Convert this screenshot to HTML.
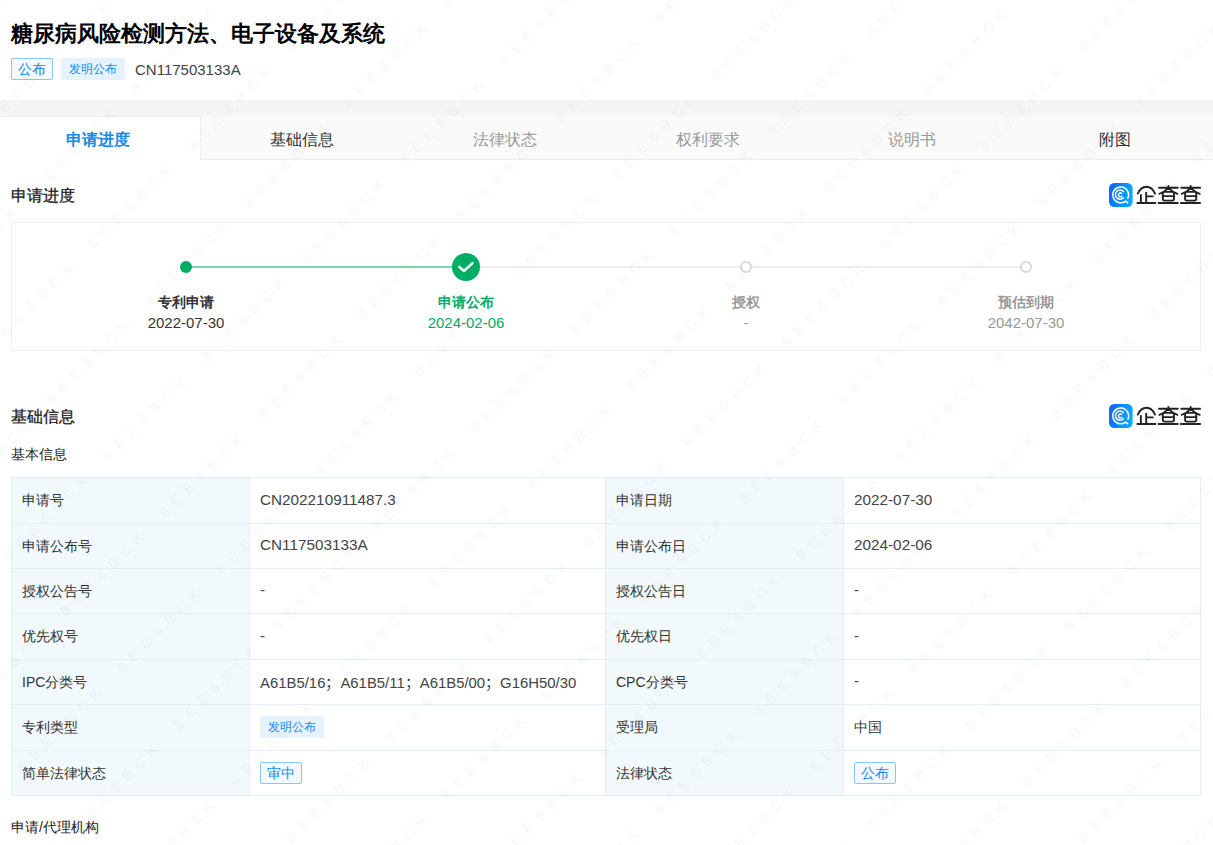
<!DOCTYPE html>
<html><head><meta charset="utf-8">
<style>
*{margin:0;padding:0;box-sizing:border-box}
html,body{width:1213px;height:845px;overflow:hidden;background:#fff}
body{font-family:"Liberation Sans",sans-serif;color:#333;position:relative}
.abs{position:absolute;white-space:nowrap}
.wm{position:absolute;left:0;top:0;pointer-events:none}
.title{left:11px;top:20px;font-size:22px;line-height:28px;font-weight:bold;color:#000}
.tag{position:absolute;top:58px;height:22px;line-height:20px;font-size:12px;color:#128bed;border-radius:2px;text-align:center}
.tag1{left:11px;width:42px;border:1px solid #88c5f6;background:#f3f9fe;font-size:14px}
.tag2{left:61px;width:64px;background:#e6f3fe;border:1px solid #e6f3fe;line-height:21px}
.pno{left:135px;top:60px;font-size:15px;line-height:20px;color:#444}
.band{left:0;top:100px;width:1213px;height:16px;background:#f5f5f5}
.tabs{position:absolute;left:-3.4px;top:116px;width:1219.7px;height:44px;display:flex;background:#fafafa;border-bottom:1px solid #eee}
.tab{flex:1;text-align:center;font-size:16px;line-height:43px;padding-top:2px;color:#333}
.tab.act{background:#fff;color:#128bed;border-right:1px solid #eee;border-top:1px solid #eee;line-height:42px;margin-bottom:-1px;font-weight:bold}
.tab.dis{color:#999}
.h2{left:11px;font-size:16px;line-height:22px;font-weight:500;color:#222;-webkit-text-stroke:0.3px #222}
.logo{position:absolute;left:1109px;width:94px;height:25px}
.box{position:absolute;left:11px;top:222px;width:1190px;height:129px;border:1px solid #eee}
.line{position:absolute;height:2px;top:266px}
.dot{position:absolute;border-radius:50%}
.slab{position:absolute;width:200px;text-align:center;font-size:14px;line-height:20px;font-weight:bold;top:292px}
.sdate{position:absolute;width:200px;text-align:center;font-size:15px;line-height:20px;top:313px}
.h3{left:11px;font-size:14px;line-height:20px;color:#222}
table{position:absolute;left:11px;top:477px;width:1189px;border-collapse:collapse;table-layout:fixed}
td{border:1px solid #e4eef6;font-size:14px;padding:1px 10px 0;color:#333;white-space:nowrap}
td.l{background:#f2f9fc}
.vt{font-size:15.3px;padding-bottom:3px;color:#444}
.ntag{display:inline-block;height:22px;line-height:20px;font-size:12px;color:#128bed;border-radius:2px;padding:0 7px;vertical-align:middle;margin-left:0;position:relative;top:-1px}
.ntag.b{border:1px solid #88c5f6;background:#f3f9fe;font-size:14px;padding:0 6px}
.ntag.f{border:1px solid #e6f3fe;background:#e6f3fe}
</style></head><body>
<div class="abs title">糖尿病风险检测方法、电子设备及系统</div>
<div class="tag tag1">公布</div>
<div class="tag tag2">发明公布</div>
<div class="abs pno">CN117503133A</div>

<div class="abs band"></div>
<div class="tabs">
  <div class="tab act">申请进度</div>
  <div class="tab">基础信息</div>
  <div class="tab dis">法律状态</div>
  <div class="tab dis">权利要求</div>
  <div class="tab dis">说明书</div>
  <div class="tab">附图</div>
</div>

<div class="abs h2" style="top:185px">申请进度</div>
<div class="logo" style="top:183px">
  <svg width="94" height="25" viewBox="0 0 94 25">
    <defs><linearGradient id="lg" x1="0" y1="0" x2="1" y2="0.3"><stop offset="0" stop-color="#0b62f7"/><stop offset="1" stop-color="#0aa8ff"/></linearGradient></defs>
    <rect x="0" y="0" width="23.6" height="24" rx="5.2" fill="url(#lg)"/>
    <g fill="none" stroke="#fff" stroke-width="1.5" stroke-linecap="round"><path d="M18.92 15.11 A7.9 7.9 0 1 0 16.56 18.12 L18.5 19.7"/><path d="M14.42 8.52 A4.6 4.6 0 1 0 14.42 14.68"/><path d="M12.6 10.45 A1.9 1.9 0 1 0 12.6 13.35" stroke-width="1.5"/></g>
    <g fill="none" stroke="#222" stroke-width="1.9" stroke-linecap="round" stroke-linejoin="round">
<path d="M28.8 10.6 C31 5.8 34.2 3.8 37.4 3.8 C40.6 3.8 43.8 5.8 46 10.6"/>
<path d="M31.9 12 V20 M37.2 9.6 V20 M37.2 13.4 H43.8 M28.4 20 H46.4"/>
<path d="M50.0 4.8 H68.8 M59.4 2.9 V4.8 M59.4 4.8 Q56.0 8.6 50.4 10.8 M59.4 4.8 Q63.0 8.6 68.4 10.8 M55.6 8.9 H63.2 Q65.0 8.9 65.0 10.7 V15.8 Q65.0 17.6 63.2 17.6 H55.6 Q53.8 17.6 53.8 15.8 V10.7 Q53.8 8.9 55.6 8.9 Z M53.8 13.1 H65.0 M49.6 20 H68.8"/><path d="M72.3 4.8 H91.1 M81.7 2.9 V4.8 M81.7 4.8 Q78.3 8.6 72.7 10.8 M81.7 4.8 Q85.3 8.6 90.7 10.8 M77.9 8.9 H85.5 Q87.3 8.9 87.3 10.7 V15.8 Q87.3 17.6 85.5 17.6 H77.9 Q76.1 17.6 76.1 15.8 V10.7 Q76.1 8.9 77.9 8.9 Z M76.1 13.1 H87.3 M71.9 20 H91.1"/>
</g>
  </svg>
</div>

<div class="box"></div>
<div class="line" style="left:186px;width:280px;background:#80d4ab"></div>
<div class="line" style="left:466px;width:560px;background:#eee"></div>
<div class="dot" style="left:180px;top:261px;width:12px;height:12px;background:#00ad65"></div>
<div class="dot" style="left:452px;top:253px;width:28px;height:28px;background:#00ad65"></div>
<svg class="abs" style="left:452px;top:253px" width="28" height="28" viewBox="0 0 28 28"><path d="M7.3 13.9 L12 18 L20.5 10.2" fill="none" stroke="#fff" stroke-width="2.5" stroke-linecap="round" stroke-linejoin="round"/></svg>
<div class="dot" style="left:740px;top:261px;width:12px;height:12px;background:#fff;border:2px solid #d8d8d8"></div>
<div class="dot" style="left:1020px;top:261px;width:12px;height:12px;background:#fff;border:2px solid #d8d8d8"></div>

<div class="slab" style="left:86px;color:#333">专利申请</div>
<div class="sdate" style="left:86px;color:#333">2022-07-30</div>
<div class="slab" style="left:366px;color:#00ad65">申请公布</div>
<div class="sdate" style="left:366px;color:#00ad65">2024-02-06</div>
<div class="slab" style="left:646px;color:#999">授权</div>
<div class="sdate" style="left:646px;color:#999">-</div>
<div class="slab" style="left:926px;color:#999">预估到期</div>
<div class="sdate" style="left:926px;color:#999">2042-07-30</div>

<div class="abs h2" style="top:406px">基础信息</div>
<div class="logo" style="top:404px">
  <svg width="94" height="25" viewBox="0 0 94 25">
    <defs><linearGradient id="lg2" x1="0" y1="0" x2="1" y2="0.3"><stop offset="0" stop-color="#0b62f7"/><stop offset="1" stop-color="#0aa8ff"/></linearGradient></defs>
    <rect x="0" y="0" width="23.6" height="24" rx="5.2" fill="url(#lg2)"/>
    <g fill="none" stroke="#fff" stroke-width="1.5" stroke-linecap="round"><path d="M18.92 15.11 A7.9 7.9 0 1 0 16.56 18.12 L18.5 19.7"/><path d="M14.42 8.52 A4.6 4.6 0 1 0 14.42 14.68"/><path d="M12.6 10.45 A1.9 1.9 0 1 0 12.6 13.35" stroke-width="1.5"/></g>
    <g fill="none" stroke="#222" stroke-width="1.9" stroke-linecap="round" stroke-linejoin="round">
<path d="M28.8 10.6 C31 5.8 34.2 3.8 37.4 3.8 C40.6 3.8 43.8 5.8 46 10.6"/>
<path d="M31.9 12 V20 M37.2 9.6 V20 M37.2 13.4 H43.8 M28.4 20 H46.4"/>
<path d="M50.0 4.8 H68.8 M59.4 2.9 V4.8 M59.4 4.8 Q56.0 8.6 50.4 10.8 M59.4 4.8 Q63.0 8.6 68.4 10.8 M55.6 8.9 H63.2 Q65.0 8.9 65.0 10.7 V15.8 Q65.0 17.6 63.2 17.6 H55.6 Q53.8 17.6 53.8 15.8 V10.7 Q53.8 8.9 55.6 8.9 Z M53.8 13.1 H65.0 M49.6 20 H68.8"/><path d="M72.3 4.8 H91.1 M81.7 2.9 V4.8 M81.7 4.8 Q78.3 8.6 72.7 10.8 M81.7 4.8 Q85.3 8.6 90.7 10.8 M77.9 8.9 H85.5 Q87.3 8.9 87.3 10.7 V15.8 Q87.3 17.6 85.5 17.6 H77.9 Q76.1 17.6 76.1 15.8 V10.7 Q76.1 8.9 77.9 8.9 Z M76.1 13.1 H87.3 M71.9 20 H91.1"/>
</g>
  </svg>
</div>
<div class="abs h3" style="top:444px">基本信息</div>

<table>
<colgroup><col style="width:238px"><col style="width:356px"><col style="width:238px"><col style="width:357px"></colgroup>
<tr style="height:46px"><td class="l">申请号</td><td class="vt">CN202210911487.3</td><td class="l">申请日期</td><td class="vt">2022-07-30</td></tr>
<tr style="height:45px"><td class="l">申请公布号</td><td class="vt">CN117503133A</td><td class="l">申请公布日</td><td class="vt">2024-02-06</td></tr>
<tr style="height:45px"><td class="l">授权公告号</td><td class="vt">-</td><td class="l">授权公告日</td><td class="vt">-</td></tr>
<tr style="height:46px"><td class="l">优先权号</td><td class="vt">-</td><td class="l">优先权日</td><td class="vt">-</td></tr>
<tr style="height:45px"><td class="l">IPC分类号</td><td class="vt"><span lang="zh-CN" style="font-size:14.9px">A61B5/16；A61B5/11；A61B5/00；G16H50/30</span></td><td class="l">CPC分类号</td><td class="vt">-</td></tr>
<tr style="height:46px"><td class="l">专利类型</td><td><span class="ntag f">发明公布</span></td><td class="l">受理局</td><td>中国</td></tr>
<tr style="height:45px"><td class="l">简单法律状态</td><td><span class="ntag b">审中</span></td><td class="l">法律状态</td><td><span class="ntag b">公布</span></td></tr>
</table>

<div class="abs h3" style="top:817px">申请/代理机构</div>
<svg class="wm" width="1213" height="845" viewBox="0 0 1213 845"><g font-family="Liberation Sans,sans-serif" font-size="14.5" font-weight="bold" text-anchor="middle" fill="#000" stroke="#000" stroke-width="0.2" opacity="0.025"><text transform="translate(-33.7 -81.6) rotate(-45)" x="0 17 34 51 68 85 102" y="5.2">8EE6BCK</text><text transform="translate(-76.1 73.8) rotate(-45)" x="0 17 34 51 68 85 102" y="5.2">8EE6BCK</text><text transform="translate(22.9 -25.1) rotate(-45)" x="0 17 34 51 68 85 102" y="5.2">8EE6BCK</text><text transform="translate(-19.5 130.3) rotate(-45)" x="0 17 34 51 68 85 102" y="5.2">8EE6BCK</text><text transform="translate(79.5 31.4) rotate(-45)" x="0 17 34 51 68 85 102" y="5.2">8EE6BCK</text><text transform="translate(178.5 -67.5) rotate(-45)" x="0 17 34 51 68 85 102" y="5.2">8EE6BCK</text><text transform="translate(-62.0 285.8) rotate(-45)" x="0 17 34 51 68 85 102" y="5.2">8EE6BCK</text><text transform="translate(37.0 186.9) rotate(-45)" x="0 17 34 51 68 85 102" y="5.2">8EE6BCK</text><text transform="translate(136.1 88.0) rotate(-45)" x="0 17 34 51 68 85 102" y="5.2">8EE6BCK</text><text transform="translate(235.1 -10.9) rotate(-45)" x="0 17 34 51 68 85 102" y="5.2">8EE6BCK</text><text transform="translate(-5.4 342.3) rotate(-45)" x="0 17 34 51 68 85 102" y="5.2">8EE6BCK</text><text transform="translate(93.6 243.4) rotate(-45)" x="0 17 34 51 68 85 102" y="5.2">8EE6BCK</text><text transform="translate(192.6 144.5) rotate(-45)" x="0 17 34 51 68 85 102" y="5.2">8EE6BCK</text><text transform="translate(291.7 45.6) rotate(-45)" x="0 17 34 51 68 85 102" y="5.2">8EE6BCK</text><text transform="translate(390.7 -53.3) rotate(-45)" x="0 17 34 51 68 85 102" y="5.2">8EE6BCK</text><text transform="translate(-47.9 497.7) rotate(-45)" x="0 17 34 51 68 85 102" y="5.2">8EE6BCK</text><text transform="translate(51.1 398.8) rotate(-45)" x="0 17 34 51 68 85 102" y="5.2">8EE6BCK</text><text transform="translate(150.2 299.9) rotate(-45)" x="0 17 34 51 68 85 102" y="5.2">8EE6BCK</text><text transform="translate(249.2 201.1) rotate(-45)" x="0 17 34 51 68 85 102" y="5.2">8EE6BCK</text><text transform="translate(348.2 102.2) rotate(-45)" x="0 17 34 51 68 85 102" y="5.2">8EE6BCK</text><text transform="translate(447.3 3.3) rotate(-45)" x="0 17 34 51 68 85 102" y="5.2">8EE6BCK</text><text transform="translate(546.3 -95.6) rotate(-45)" x="0 17 34 51 68 85 102" y="5.2">8EE6BCK</text><text transform="translate(-90.4 653.2) rotate(-45)" x="0 17 34 51 68 85 102" y="5.2">8EE6BCK</text><text transform="translate(8.7 554.3) rotate(-45)" x="0 17 34 51 68 85 102" y="5.2">8EE6BCK</text><text transform="translate(107.7 455.4) rotate(-45)" x="0 17 34 51 68 85 102" y="5.2">8EE6BCK</text><text transform="translate(206.7 356.5) rotate(-45)" x="0 17 34 51 68 85 102" y="5.2">8EE6BCK</text><text transform="translate(305.8 257.6) rotate(-45)" x="0 17 34 51 68 85 102" y="5.2">8EE6BCK</text><text transform="translate(404.8 158.7) rotate(-45)" x="0 17 34 51 68 85 102" y="5.2">8EE6BCK</text><text transform="translate(503.8 59.8) rotate(-45)" x="0 17 34 51 68 85 102" y="5.2">8EE6BCK</text><text transform="translate(602.9 -39.1) rotate(-45)" x="0 17 34 51 68 85 102" y="5.2">8EE6BCK</text><text transform="translate(-33.8 709.7) rotate(-45)" x="0 17 34 51 68 85 102" y="5.2">8EE6BCK</text><text transform="translate(65.2 610.8) rotate(-45)" x="0 17 34 51 68 85 102" y="5.2">8EE6BCK</text><text transform="translate(164.3 511.9) rotate(-45)" x="0 17 34 51 68 85 102" y="5.2">8EE6BCK</text><text transform="translate(263.3 413.0) rotate(-45)" x="0 17 34 51 68 85 102" y="5.2">8EE6BCK</text><text transform="translate(362.3 314.1) rotate(-45)" x="0 17 34 51 68 85 102" y="5.2">8EE6BCK</text><text transform="translate(461.4 215.2) rotate(-45)" x="0 17 34 51 68 85 102" y="5.2">8EE6BCK</text><text transform="translate(560.4 116.3) rotate(-45)" x="0 17 34 51 68 85 102" y="5.2">8EE6BCK</text><text transform="translate(659.4 17.5) rotate(-45)" x="0 17 34 51 68 85 102" y="5.2">8EE6BCK</text><text transform="translate(758.5 -81.4) rotate(-45)" x="0 17 34 51 68 85 102" y="5.2">8EE6BCK</text><text transform="translate(-76.2 865.1) rotate(-45)" x="0 17 34 51 68 85 102" y="5.2">8EE6BCK</text><text transform="translate(22.8 766.2) rotate(-45)" x="0 17 34 51 68 85 102" y="5.2">8EE6BCK</text><text transform="translate(121.8 667.3) rotate(-45)" x="0 17 34 51 68 85 102" y="5.2">8EE6BCK</text><text transform="translate(220.8 568.5) rotate(-45)" x="0 17 34 51 68 85 102" y="5.2">8EE6BCK</text><text transform="translate(319.9 469.6) rotate(-45)" x="0 17 34 51 68 85 102" y="5.2">8EE6BCK</text><text transform="translate(418.9 370.7) rotate(-45)" x="0 17 34 51 68 85 102" y="5.2">8EE6BCK</text><text transform="translate(517.9 271.8) rotate(-45)" x="0 17 34 51 68 85 102" y="5.2">8EE6BCK</text><text transform="translate(617.0 172.9) rotate(-45)" x="0 17 34 51 68 85 102" y="5.2">8EE6BCK</text><text transform="translate(716.0 74.0) rotate(-45)" x="0 17 34 51 68 85 102" y="5.2">8EE6BCK</text><text transform="translate(815.0 -24.9) rotate(-45)" x="0 17 34 51 68 85 102" y="5.2">8EE6BCK</text><text transform="translate(-19.7 921.7) rotate(-45)" x="0 17 34 51 68 85 102" y="5.2">8EE6BCK</text><text transform="translate(79.4 822.8) rotate(-45)" x="0 17 34 51 68 85 102" y="5.2">8EE6BCK</text><text transform="translate(178.4 723.9) rotate(-45)" x="0 17 34 51 68 85 102" y="5.2">8EE6BCK</text><text transform="translate(277.4 625.0) rotate(-45)" x="0 17 34 51 68 85 102" y="5.2">8EE6BCK</text><text transform="translate(376.5 526.1) rotate(-45)" x="0 17 34 51 68 85 102" y="5.2">8EE6BCK</text><text transform="translate(475.5 427.2) rotate(-45)" x="0 17 34 51 68 85 102" y="5.2">8EE6BCK</text><text transform="translate(574.5 328.3) rotate(-45)" x="0 17 34 51 68 85 102" y="5.2">8EE6BCK</text><text transform="translate(673.5 229.4) rotate(-45)" x="0 17 34 51 68 85 102" y="5.2">8EE6BCK</text><text transform="translate(772.6 130.5) rotate(-45)" x="0 17 34 51 68 85 102" y="5.2">8EE6BCK</text><text transform="translate(871.6 31.7) rotate(-45)" x="0 17 34 51 68 85 102" y="5.2">8EE6BCK</text><text transform="translate(970.6 -67.2) rotate(-45)" x="0 17 34 51 68 85 102" y="5.2">8EE6BCK</text><text transform="translate(36.9 978.2) rotate(-45)" x="0 17 34 51 68 85 102" y="5.2">8EE6BCK</text><text transform="translate(135.9 879.3) rotate(-45)" x="0 17 34 51 68 85 102" y="5.2">8EE6BCK</text><text transform="translate(235.0 780.4) rotate(-45)" x="0 17 34 51 68 85 102" y="5.2">8EE6BCK</text><text transform="translate(334.0 681.5) rotate(-45)" x="0 17 34 51 68 85 102" y="5.2">8EE6BCK</text><text transform="translate(433.0 582.6) rotate(-45)" x="0 17 34 51 68 85 102" y="5.2">8EE6BCK</text><text transform="translate(532.0 483.8) rotate(-45)" x="0 17 34 51 68 85 102" y="5.2">8EE6BCK</text><text transform="translate(631.1 384.9) rotate(-45)" x="0 17 34 51 68 85 102" y="5.2">8EE6BCK</text><text transform="translate(730.1 286.0) rotate(-45)" x="0 17 34 51 68 85 102" y="5.2">8EE6BCK</text><text transform="translate(829.1 187.1) rotate(-45)" x="0 17 34 51 68 85 102" y="5.2">8EE6BCK</text><text transform="translate(928.2 88.2) rotate(-45)" x="0 17 34 51 68 85 102" y="5.2">8EE6BCK</text><text transform="translate(1027.2 -10.7) rotate(-45)" x="0 17 34 51 68 85 102" y="5.2">8EE6BCK</text><text transform="translate(192.5 935.8) rotate(-45)" x="0 17 34 51 68 85 102" y="5.2">8EE6BCK</text><text transform="translate(291.5 837.0) rotate(-45)" x="0 17 34 51 68 85 102" y="5.2">8EE6BCK</text><text transform="translate(390.6 738.1) rotate(-45)" x="0 17 34 51 68 85 102" y="5.2">8EE6BCK</text><text transform="translate(489.6 639.2) rotate(-45)" x="0 17 34 51 68 85 102" y="5.2">8EE6BCK</text><text transform="translate(588.6 540.3) rotate(-45)" x="0 17 34 51 68 85 102" y="5.2">8EE6BCK</text><text transform="translate(687.7 441.4) rotate(-45)" x="0 17 34 51 68 85 102" y="5.2">8EE6BCK</text><text transform="translate(786.7 342.5) rotate(-45)" x="0 17 34 51 68 85 102" y="5.2">8EE6BCK</text><text transform="translate(885.7 243.6) rotate(-45)" x="0 17 34 51 68 85 102" y="5.2">8EE6BCK</text><text transform="translate(984.7 144.7) rotate(-45)" x="0 17 34 51 68 85 102" y="5.2">8EE6BCK</text><text transform="translate(1083.8 45.8) rotate(-45)" x="0 17 34 51 68 85 102" y="5.2">8EE6BCK</text><text transform="translate(1182.8 -53.1) rotate(-45)" x="0 17 34 51 68 85 102" y="5.2">8EE6BCK</text><text transform="translate(249.1 992.4) rotate(-45)" x="0 17 34 51 68 85 102" y="5.2">8EE6BCK</text><text transform="translate(348.1 893.5) rotate(-45)" x="0 17 34 51 68 85 102" y="5.2">8EE6BCK</text><text transform="translate(447.1 794.6) rotate(-45)" x="0 17 34 51 68 85 102" y="5.2">8EE6BCK</text><text transform="translate(546.2 695.7) rotate(-45)" x="0 17 34 51 68 85 102" y="5.2">8EE6BCK</text><text transform="translate(645.2 596.8) rotate(-45)" x="0 17 34 51 68 85 102" y="5.2">8EE6BCK</text><text transform="translate(744.2 497.9) rotate(-45)" x="0 17 34 51 68 85 102" y="5.2">8EE6BCK</text><text transform="translate(843.2 399.1) rotate(-45)" x="0 17 34 51 68 85 102" y="5.2">8EE6BCK</text><text transform="translate(942.3 300.2) rotate(-45)" x="0 17 34 51 68 85 102" y="5.2">8EE6BCK</text><text transform="translate(1041.3 201.3) rotate(-45)" x="0 17 34 51 68 85 102" y="5.2">8EE6BCK</text><text transform="translate(1140.3 102.4) rotate(-45)" x="0 17 34 51 68 85 102" y="5.2">8EE6BCK</text><text transform="translate(1239.4 3.5) rotate(-45)" x="0 17 34 51 68 85 102" y="5.2">8EE6BCK</text><text transform="translate(404.7 950.0) rotate(-45)" x="0 17 34 51 68 85 102" y="5.2">8EE6BCK</text><text transform="translate(503.7 851.1) rotate(-45)" x="0 17 34 51 68 85 102" y="5.2">8EE6BCK</text><text transform="translate(602.7 752.3) rotate(-45)" x="0 17 34 51 68 85 102" y="5.2">8EE6BCK</text><text transform="translate(701.8 653.4) rotate(-45)" x="0 17 34 51 68 85 102" y="5.2">8EE6BCK</text><text transform="translate(800.8 554.5) rotate(-45)" x="0 17 34 51 68 85 102" y="5.2">8EE6BCK</text><text transform="translate(899.8 455.6) rotate(-45)" x="0 17 34 51 68 85 102" y="5.2">8EE6BCK</text><text transform="translate(998.9 356.7) rotate(-45)" x="0 17 34 51 68 85 102" y="5.2">8EE6BCK</text><text transform="translate(1097.9 257.8) rotate(-45)" x="0 17 34 51 68 85 102" y="5.2">8EE6BCK</text><text transform="translate(1196.9 158.9) rotate(-45)" x="0 17 34 51 68 85 102" y="5.2">8EE6BCK</text><text transform="translate(461.2 1006.6) rotate(-45)" x="0 17 34 51 68 85 102" y="5.2">8EE6BCK</text><text transform="translate(560.3 907.7) rotate(-45)" x="0 17 34 51 68 85 102" y="5.2">8EE6BCK</text><text transform="translate(659.3 808.8) rotate(-45)" x="0 17 34 51 68 85 102" y="5.2">8EE6BCK</text><text transform="translate(758.3 709.9) rotate(-45)" x="0 17 34 51 68 85 102" y="5.2">8EE6BCK</text><text transform="translate(857.4 611.0) rotate(-45)" x="0 17 34 51 68 85 102" y="5.2">8EE6BCK</text><text transform="translate(956.4 512.1) rotate(-45)" x="0 17 34 51 68 85 102" y="5.2">8EE6BCK</text><text transform="translate(1055.4 413.2) rotate(-45)" x="0 17 34 51 68 85 102" y="5.2">8EE6BCK</text><text transform="translate(1154.5 314.3) rotate(-45)" x="0 17 34 51 68 85 102" y="5.2">8EE6BCK</text><text transform="translate(616.8 964.2) rotate(-45)" x="0 17 34 51 68 85 102" y="5.2">8EE6BCK</text><text transform="translate(715.9 865.3) rotate(-45)" x="0 17 34 51 68 85 102" y="5.2">8EE6BCK</text><text transform="translate(814.9 766.4) rotate(-45)" x="0 17 34 51 68 85 102" y="5.2">8EE6BCK</text><text transform="translate(913.9 667.6) rotate(-45)" x="0 17 34 51 68 85 102" y="5.2">8EE6BCK</text><text transform="translate(1013.0 568.7) rotate(-45)" x="0 17 34 51 68 85 102" y="5.2">8EE6BCK</text><text transform="translate(1112.0 469.8) rotate(-45)" x="0 17 34 51 68 85 102" y="5.2">8EE6BCK</text><text transform="translate(1211.0 370.9) rotate(-45)" x="0 17 34 51 68 85 102" y="5.2">8EE6BCK</text><text transform="translate(772.4 921.9) rotate(-45)" x="0 17 34 51 68 85 102" y="5.2">8EE6BCK</text><text transform="translate(871.5 823.0) rotate(-45)" x="0 17 34 51 68 85 102" y="5.2">8EE6BCK</text><text transform="translate(970.5 724.1) rotate(-45)" x="0 17 34 51 68 85 102" y="5.2">8EE6BCK</text><text transform="translate(1069.5 625.2) rotate(-45)" x="0 17 34 51 68 85 102" y="5.2">8EE6BCK</text><text transform="translate(1168.6 526.3) rotate(-45)" x="0 17 34 51 68 85 102" y="5.2">8EE6BCK</text><text transform="translate(829.0 978.4) rotate(-45)" x="0 17 34 51 68 85 102" y="5.2">8EE6BCK</text><text transform="translate(928.0 879.5) rotate(-45)" x="0 17 34 51 68 85 102" y="5.2">8EE6BCK</text><text transform="translate(1027.1 780.6) rotate(-45)" x="0 17 34 51 68 85 102" y="5.2">8EE6BCK</text><text transform="translate(1126.1 681.8) rotate(-45)" x="0 17 34 51 68 85 102" y="5.2">8EE6BCK</text><text transform="translate(1225.1 582.9) rotate(-45)" x="0 17 34 51 68 85 102" y="5.2">8EE6BCK</text><text transform="translate(984.6 936.1) rotate(-45)" x="0 17 34 51 68 85 102" y="5.2">8EE6BCK</text><text transform="translate(1083.6 837.2) rotate(-45)" x="0 17 34 51 68 85 102" y="5.2">8EE6BCK</text><text transform="translate(1182.7 738.3) rotate(-45)" x="0 17 34 51 68 85 102" y="5.2">8EE6BCK</text><text transform="translate(1041.2 992.6) rotate(-45)" x="0 17 34 51 68 85 102" y="5.2">8EE6BCK</text><text transform="translate(1140.2 893.7) rotate(-45)" x="0 17 34 51 68 85 102" y="5.2">8EE6BCK</text><text transform="translate(1239.2 794.8) rotate(-45)" x="0 17 34 51 68 85 102" y="5.2">8EE6BCK</text><text transform="translate(1196.8 950.3) rotate(-45)" x="0 17 34 51 68 85 102" y="5.2">8EE6BCK</text></g></svg>
</body></html>
